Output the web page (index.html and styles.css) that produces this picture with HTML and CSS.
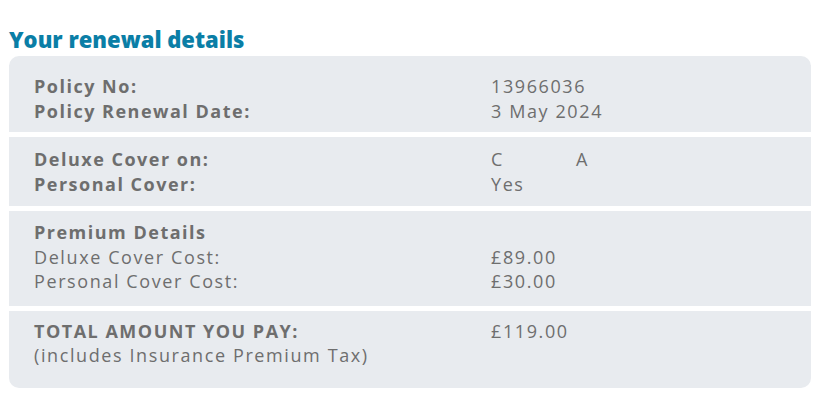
FILE: index.html
```html
<!DOCTYPE html>
<html>
<head>
<meta charset="utf-8">
<link rel="stylesheet" href="styles.css">
</head>
<body>
<div class="page">
  <h2 class="title">Your renewal details</h2>
  <div class="panel">
    <div class="row row-1">
      <div class="labels strong">
        <div>Policy No:</div>
        <div>Policy Renewal Date:</div>
      </div>
      <div class="values">
        <div>13966036</div>
        <div>3 May 2024</div>
      </div>
    </div>
    <div class="row row-2">
      <div class="labels strong">
        <div>Deluxe Cover on:</div>
        <div>Personal Cover:</div>
      </div>
      <div class="values">
        <div class="pair"><span>C</span><span>A</span></div>
        <div>Yes</div>
      </div>
    </div>
    <div class="row row-3">
      <div class="labels">
        <div class="strong">Premium Details</div>
        <div>Deluxe Cover Cost:</div>
        <div>Personal Cover Cost:</div>
      </div>
      <div class="values">
        <div>&nbsp;</div>
        <div>£89.00</div>
        <div>£30.00</div>
      </div>
    </div>
    <div class="row row-4">
      <div class="labels">
        <div class="strong">TOTAL AMOUNT YOU PAY:</div>
        <div>(includes Insurance Premium Tax)</div>
      </div>
      <div class="values">
        <div>£119.00</div>
      </div>
    </div>
  </div>
</div>
</body>
</html>
```
FILE: styles.css
```css
html, body {
  margin: 0;
  padding: 0;
  background: #ffffff;
}
.page {
  padding: 26px 0 0 9px;
  font-family: "Open Sans", "Lato", sans-serif;
  color: #6e6e6e;
}
.title {
  margin: 0 0 4px 0;
  font-size: 22px;
  line-height: 26px;
  font-weight: 800;
  color: #0a7ea6;
}
.panel {
  width: 802px;
  background: #e8ebef;
  border-radius: 10px;
  padding: 9px 0 15px 0;
  display: flex;
  flex-direction: column;
}
.row {
  background: #e8ebef;
  display: grid;
  grid-template-columns: 457px 1fr;
  padding-left: 25px;
  font-size: 18px;
  letter-spacing: 1.6px;
  line-height: 24.5px;
}
.row + .row {
  border-top: 5px solid #ffffff;
}
.row-1 { padding-top: 9px; padding-bottom: 9px; }
.row-2 { padding-top: 10px; padding-bottom: 10px; }
.row-3 { padding-top: 9px; padding-bottom: 12px; }
.row-4 { padding-top: 8px; padding-bottom: 5px; }
.strong,
.labels.strong div {
  font-weight: 700;
  letter-spacing: 1.5px;
}
.pair {
  display: flex;
  gap: 72px;
}
```
